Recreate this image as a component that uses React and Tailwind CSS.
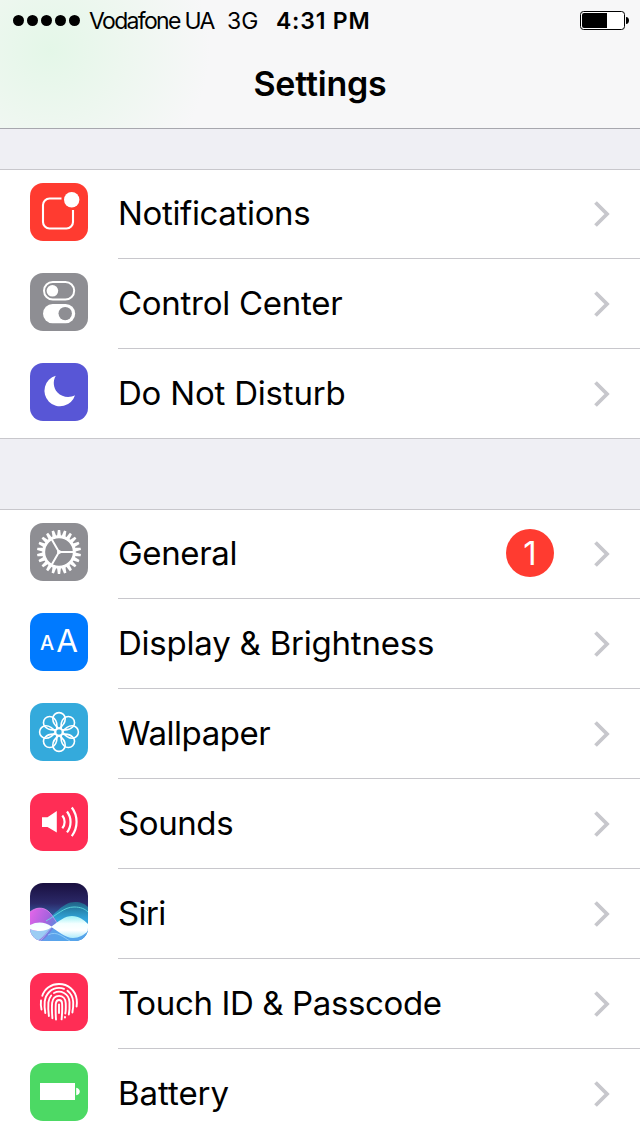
import React from 'react';

const GEAR_TEETH = Array.from({ length: 22 }, (_, i) => (i * 360) / 22);
const PETALS = [0, 45, 90, 135, 180, 225, 270, 315];

function Tile({ className = '', children }) {
    return (
        <svg viewBox="0 0 58 58" className={`w-[58px] h-[58px] rounded-[13px] shrink-0 mb-1 ${className}`} fill="none">
            {children}
        </svg>
    );
}

function NotificationsIcon() {
    return (
        <Tile className="bg-[#ff3b30]">
            <path d="M31.5 15.5H19.5A6.5 6.5 0 0 0 13 22V39A6.5 6.5 0 0 0 19.5 45.5H36.5A6.5 6.5 0 0 0 43 39V27" stroke="#fff" strokeWidth="2.1" />
            <circle cx="41.7" cy="16.7" r="7.7" fill="#fff" />
        </Tile>
    );
}

function ControlCenterIcon() {
    return (
        <Tile className="bg-[#8e8e93]">
            <rect x="14" y="9" width="30.2" height="17.6" rx="8.8" stroke="#fff" strokeWidth="2" />
            <circle cx="22.4" cy="17.8" r="5.8" fill="#fff" />
            <rect x="13" y="31" width="32.2" height="19.3" rx="9.65" fill="#fff" />
            <circle cx="35.2" cy="40.6" r="6.7" fill="#8e8e93" />
        </Tile>
    );
}

function MoonIcon() {
    return (
        <Tile className="bg-[#5856d6]">
            <path d="M25.8 12.7A15.6 15.6 0 1 0 45 32.2C40 35 32 34.5 27.5 29.5C23.3 24.8 22.6 18 25.8 12.7Z" fill="#fff" />
        </Tile>
    );
}

function GearIcon() {
    return (
        <Tile className="bg-[#8e8e93]">
            <g fill="#fff">
                {GEAR_TEETH.map((a) => (
                    <path key={a} d="M27 13.5L27.8 7H30.2L31 13.5Z" transform={`rotate(${a} 29 29)`} />
                ))}
            </g>
            <circle cx="29" cy="29" r="15.3" stroke="#fff" strokeWidth="2.9" />
            <path d="M29 29H43M29 29L21.8 16.5M29 29L21.8 41.5" stroke="#fff" strokeWidth="2" />
            <circle cx="29" cy="29" r="2" fill="#fff" />
        </Tile>
    );
}

function DisplayIcon() {
    return (
        <Tile className="bg-[#007aff] font-['Inter']">
            <text x="10" y="36.7" fontSize="20" fontWeight="500" fill="#fff">A</text>
            <text x="26.2" y="39" fontSize="31.5" fill="#fff">A</text>
        </Tile>
    );
}

function WallpaperIcon() {
    return (
        <Tile className="bg-[#34aadc]">
            <g stroke="#fff" strokeWidth="1.6">
                {PETALS.map((a) => (
                    <path key={a} d="M29 25.5C25.6 23.2 22.8 20 22.8 15.8A6.2 6.2 0 0 1 35.2 15.8C35.2 20 32.4 23.2 29 25.5Z" transform={`rotate(${a} 29 29)`} />
                ))}
                <circle cx="29" cy="29" r="3.5" />
            </g>
        </Tile>
    );
}

function SoundsIcon() {
    return (
        <Tile className="bg-[#ff2d55]">
            <path d="M12 24.3H17.5L26.8 18V39.5L17.5 34H12Z" fill="#fff" />
            <g stroke="#fff" strokeWidth="2.2">
                <path d="M32.3 22.5A10 10 0 0 1 32.3 35.3" />
                <path d="M37 18.5A17 17 0 0 1 37 39.3" />
                <path d="M41.8 14.5A24 24 0 0 1 41.8 43.2" />
            </g>
        </Tile>
    );
}

function SiriIcon() {
    return (
        <Tile>
            <defs>
                <linearGradient id="siri-bg" x1="0" y1="0" x2="0" y2="1">
                    <stop offset="0" stopColor="#190f3f" />
                    <stop offset="0.35" stopColor="#2b2968" />
                    <stop offset="0.7" stopColor="#3a7fca" />
                    <stop offset="1" stopColor="#4f92da" />
                </linearGradient>
                <linearGradient id="siri-pink" x1="0" y1="0" x2="1" y2="0.4">
                    <stop offset="0" stopColor="#e766ea" />
                    <stop offset="0.5" stopColor="#a862de" />
                    <stop offset="1" stopColor="#5d8be0" stopOpacity="0.3" />
                </linearGradient>
                <linearGradient id="siri-teal" x1="0" y1="0" x2="0" y2="1">
                    <stop offset="0" stopColor="#1c8a9c" stopOpacity="0.6" />
                    <stop offset="0.45" stopColor="#33a5dc" />
                    <stop offset="1" stopColor="#4294e0" />
                </linearGradient>
                <linearGradient id="siri-wave" x1="0" y1="0" x2="0" y2="1">
                    <stop offset="0" stopColor="#9cf0f5" />
                    <stop offset="0.35" stopColor="#f4ffff" />
                    <stop offset="0.65" stopColor="#fff" />
                    <stop offset="1" stopColor="#b0ecfb" />
                </linearGradient>
            </defs>
            <rect width="58" height="58" fill="url(#siri-bg)" />
            <path d="M14 38C25 33 32 19 45 19C51 19 55 21 58 24V58H14Z" fill="url(#siri-teal)" />
            <path d="M0 29C6 24 13 24 18 28C25 34 28 45 37 52L25 58H0Z" fill="url(#siri-pink)" />
            <path d="M0 29C6 24 13 24 18 28C25 34 28 45 37 52" stroke="#ef8cf2" strokeWidth="0.7" />
            <path d="M16 38C27 32 34 24 44 24C51 24 55 26 58 29" stroke="#67e5e4" strokeWidth="0.8" />
            <path d="M10 58C18 56 20 45 33 38L44 45L58 47V58Z" fill="#5ca9ed" opacity="0.8" />
            <path d="M0 58V46C8 50 14 46 21.5 43.5C17 49 12 56 7 58Z" fill="#9ccdf4" />
            <path d="M0 42C8 38 15 39 21.5 43.5C29 38 35 33 42 33C49 33 54 37 58 41V48C54 52 49 55 43 55C35 55 28 48 21.5 44.3C15 49 8 49 0 46Z" fill="url(#siri-wave)" />
            <path d="M10 58C15 53 18 48 22 44M18 52C27 47 34 55 40 58" stroke="#b5e7ff" strokeWidth="0.7" opacity="0.8" />
        </Tile>
    );
}

function TouchIdIcon() {
    return (
        <Tile className="bg-[#ff2d55]">
            <g stroke="#fff" strokeWidth="1.9" strokeLinecap="round">
                <path d="M11.5 36.5C10.7 33 10.7 30 11 27.5M12.3 22.8C14.5 15.5 21 11 29 11C38 11 45.5 17 46.7 26.5C47 29 47 31.5 46.6 33.5" />
                <path d="M15.3 40C14.5 36 14.4 32 14.7 28.5C15.8 20.5 21.5 14.9 29 14.9C31 14.9 32.5 15.2 34 15.8M37.5 17.7C41 20.5 43 24.5 43.2 29C43.4 33 43.1 36 42.4 39.5" />
                <path d="M18.9 43C18.2 38 18.1 33.5 18.4 29.5C18.8 26.5 19.8 24.2 21.2 22.5M24 20C30.5 16.5 39 20.5 39.5 29C39.7 34 39.5 38 38.8 41.5" />
                <path d="M22.4 45.2C21.9 40 21.8 35 22.1 30C22.7 25.5 25.5 22.9 29 22.9C33 22.9 35.5 26 35.7 30C35.9 34 35.8 38 35.3 40.5M35 44V44.5" />
                <path d="M26 46.5C25.6 41 25.5 36 25.8 30.5C26.2 28.2 27.3 27 29 27C30.8 27 32 28.5 32.1 30.5C32.3 35 32.2 41 31.6 46.3" />
                <path d="M29 31.5V40" />
            </g>
        </Tile>
    );
}

function BatteryIcon() {
    return (
        <Tile className="bg-[#4cd964]">
            <rect x="10" y="20" width="35" height="17" fill="#fff" />
            <path d="M46.2 24.7C51 25.5 51 31.5 46.2 32.3Z" fill="#fff" />
        </Tile>
    );
}

const groups = [
    [
        { label: 'Notifications', icon: NotificationsIcon, tracking: 'tracking-[-0.35px]' },
        { label: 'Control Center', icon: ControlCenterIcon, tracking: 'tracking-[-0.27px]' },
        { label: 'Do Not Disturb', icon: MoonIcon, tracking: 'tracking-[-0.2px]' },
    ],
    [
        { label: 'General', icon: GearIcon, badge: 1, tracking: 'tracking-[-0.35px]' },
        { label: 'Display & Brightness', icon: DisplayIcon, tracking: 'tracking-[-0.22px]' },
        { label: 'Wallpaper', icon: WallpaperIcon, tracking: 'tracking-[-0.45px]' },
        { label: 'Sounds', icon: SoundsIcon, tracking: 'tracking-[-0.4px]' },
        { label: 'Siri', icon: SiriIcon, tracking: 'tracking-[-0.6px]' },
        { label: 'Touch ID & Passcode', icon: TouchIdIcon, tracking: 'tracking-[-0.37px]' },
        { label: 'Battery', icon: BatteryIcon, tracking: 'tracking-[-0.05px]' },
    ],
];

function Row({ item, last }) {
    const Icon = item.icon;

    return (
        <li className="flex items-center h-[90px] pl-[30px]">
            <Icon />
            <div className={`flex items-center flex-1 h-full ml-[30px] pr-[30px] border-b ${last ? 'border-transparent' : 'border-[#c8c7cc]'}`}>
                <span className={`flex-1 mb-px text-[33px] leading-none whitespace-nowrap ${item.tracking}`}>{item.label}</span>
                {item.badge && (
                    <span className="flex items-center justify-center size-12 mr-10 mb-0.5 pt-px rounded-full bg-[#ff3b30] text-white text-[33px] leading-none">
                        {item.badge}
                    </span>
                )}
                <svg viewBox="0 0 16 28" className="w-4 h-7" fill="none">
                    <path d="M1.5 2.5L13 14L1.5 25.5" stroke="#c7c7cc" strokeWidth="3.8" />
                </svg>
            </div>
        </li>
    );
}

function StatusBar() {
    return (
        <div className="flex items-center h-[41px] pl-[13px] pr-[11px] text-[23px] leading-none">
            <div className="flex gap-[3px]">
                {[0, 1, 2, 3, 4].map((i) => (
                    <span key={i} className="size-[11px] rounded-full bg-black" />
                ))}
            </div>
            <span className="ml-[9px] mt-0.5 w-[138px] whitespace-nowrap tracking-[-1.68px]">Vodafone UA</span>
            <span className="mt-0.5 w-[49px]">3G</span>
            <span className="mt-0.5 font-semibold whitespace-nowrap tracking-[0.8px]">4:31 PM</span>
            <svg viewBox="0 0 49 19" className="ml-auto w-[49px] h-[19px]" fill="none">
                <rect x="0.5" y="0.5" width="44" height="18" rx="3" fill="#fff" stroke="#000" />
                <path d="M4 2H27V17H4A2 2 0 0 1 2 15V4A2 2 0 0 1 4 2Z" fill="#000" />
                <path d="M46 6C50 6 50 13 46 13Z" fill="#000" />
            </svg>
        </div>
    );
}

export default function App() {
    return (
        <div className="w-[640px] h-[1136px] overflow-hidden bg-[#efeff4] text-black font-['Inter',sans-serif]">
            <header className="h-[129px] border-b border-[#a7a7ae] bg-[#f7f7f8] bg-[radial-gradient(ellipse_160px_150px_at_50px_50px,#e4f7e8,#edf7ef_45%,#f7f7f8)]">
                <StatusBar />
                <h1 className="h-[85px] flex items-center justify-center text-[34px] font-semibold tracking-[-0.2px]">Settings</h1>
            </header>
            <main className="pt-10 flex flex-col gap-[70px]">
                {groups.map((items, i) => (
                    <section key={i} className="bg-white border-t border-b border-[#c8c7cc]">
                        <ul className="-my-px">
                            {items.map((item, j) => (
                                <Row key={item.label} item={item} last={j === items.length - 1} />
                            ))}
                        </ul>
                    </section>
                ))}
            </main>
        </div>
    );
}
